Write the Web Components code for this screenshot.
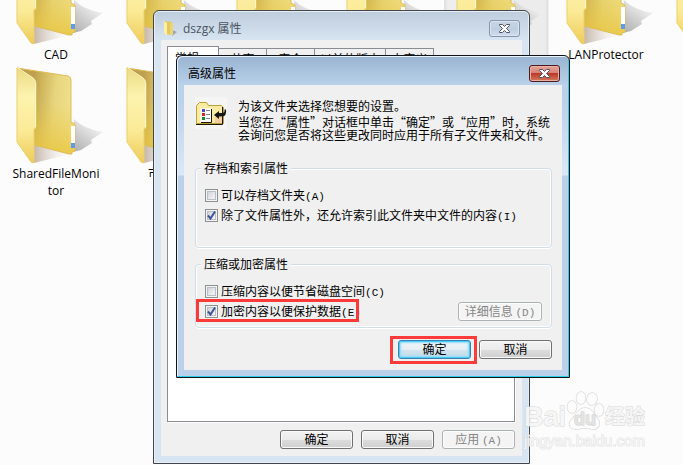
<!DOCTYPE html>
<html lang="zh-CN">
<head>
<meta charset="utf-8">
<title>高级属性</title>
<style>
html, body { height: 100%; margin: 0; }
body { background: #fcfcfc; font: 12px/16px "Noto Sans CJK SC", sans-serif; color: #000; overflow: hidden; }
</style>
</head>
<body>
<desk-top></desk-top>
<script>
const define = (name, html, setup) => customElements.define(name, class extends HTMLElement {
  connectedCallback() {
    if (this.shadowRoot) return;
    const t = document.createElement('template');
    t.innerHTML = html.trim();
    this.attachShadow({ mode: 'open' }).append(t.content.cloneNode(true));
    if (setup) setup(this, this.shadowRoot);
  }
});

const folderArt = `
<svg viewBox="0 0 90 98" aria-hidden="true">
  <defs>
    <linearGradient id="back" x1="0" y1="0" x2="1" y2=".15"><stop offset=".3" stop-color="#bfa04e"/><stop offset=".45" stop-color="#d0b65c"/><stop offset=".7" stop-color="#e8d67e"/><stop offset="1" stop-color="#f0e190"/></linearGradient>
    <linearGradient id="glow" x1="0" y1="0" x2="0" y2="1"><stop offset=".4" stop-color="#e8c840" stop-opacity="0"/><stop offset="1" stop-color="#e8c43c" stop-opacity=".8"/></linearGradient>
    <linearGradient id="front" x1="0" y1="0" x2="0" y2="1"><stop offset="0" stop-color="#eadb85"/><stop offset=".3" stop-color="#fdf3ae"/><stop offset=".65" stop-color="#fbeb98"/><stop offset="1" stop-color="#eecb57"/></linearGradient>
    <linearGradient id="shade" x1="0" y1="1" x2=".7" y2="0"><stop offset="0" stop-color="#adadad"/><stop offset=".5" stop-color="#d2d2d2"/><stop offset="1" stop-color="#fafafa"/></linearGradient>
    <linearGradient id="under" x1="0" y1="0" x2="1" y2="0"><stop offset="0" stop-color="#c5b6a8"/><stop offset="1" stop-color="#fcfcfc" stop-opacity=".2"/></linearGradient>
  </defs>
  <path d="M58 52 Q68 62 87 65 L75 73 L76 76 L65 83 L57 85Z" fill="url(#shade)"/>
  <path d="M18 77 L55 87 L18 96Z" fill="url(#under)"/>
  <path d="M1 1 L52 9 Q55 10 55 13 V55 L59 57 V84 L56 85 V87 L53 87 L18 78Z" fill="url(#back)"/>
  <path d="M1 1 L52 9 Q55 10 55 13 V55 L59 57 V84 L56 85 V87 L53 87 L18 78Z" fill="url(#glow)" stroke="#dfbe56"/>
  <path d="M55 59 H59 V81 H55Z" fill="#fff"/><path d="M55 76 H59 V81 H55Z" fill="#5c9cf0"/>
  <path d="M1 1 L17 11 Q20 13 20 17 V61 L18 62 V96 L15 95 L1 75Z" fill="url(#front)" stroke="#ecd06d"/>
  <path d="M2 1 L17 11 Q19.500 13 19.500 17 V60" fill="none" stroke="#fff7c9"/>
</svg>`;

define('folder-item', `
<style>
:host { display: flex; flex-direction: column; align-items: center; height: 119px; font: 12px/17px "Open Sans", "Noto Sans CJK SC", sans-serif; }
:host([selected]) { background: linear-gradient(90deg, #fcfcfc 3px, #dedede 3px, #eee 7px, #ececec 104px, #dedede 107px, #fcfcfc 108px); }
svg { width: 90px; height: 98px; flex: none; margin-left: 10px; }
span { width: 90px; text-align: center; overflow-wrap: anywhere; }
:host([start]) span { width: 36px; white-space: nowrap; text-align: left; }
</style>${folderArt}<span><slot></slot></span>`);

define('close-button', `
<style>
:host { display: block; }
button { display: grid; place-items: center; width: 31px; height: 17px; padding: 0; border: 1px solid #8694ad; border-radius: 3px; background: linear-gradient(#c5d3e1, #c2d1e1 50%, #bdcde0 50%, #d0deed); box-shadow: inset 0 0 0 1px #dbe6f1; }
:host([red]) button { border-color: #50181c; background: linear-gradient(#e5a59b, #d77e70 50%, #b83c27 50%, #d5785c); box-shadow: inset 0 0 0 1px #e7b1a7; }
svg { width: 13px; height: 11px; }
</style>
<button aria-label="关闭"><svg viewBox="0 0 13 11"><path d="M1.500 1.500 H4.500 L6.500 3.500 L8.500 1.500 H11.500 V2.500 L8.500 5.500 L11.500 8.500 V9.500 H8.500 L6.500 7.500 L4.500 9.500 H1.500 V8.500 L4.500 5.500 L1.500 2.500Z" fill="#fff" stroke="#53546a"/></svg></button>`);

define('push-button', `
<style>
:host { display: block; width: 73px; }
:host([wide]) { width: 84px; }
button { box-sizing: border-box; width: 100%; height: 19px; padding: 0 0 2px; font: 12px/15px "Noto Sans CJK SC", sans-serif; color: #000; border: 1px solid #707070; border-radius: 3px; background: linear-gradient(#f3f3f3, #ebebeb 50%, #dddddd 50%, #cfcfcf); box-shadow: inset 0 0 0 1px #fafafa; }
button:disabled { color: #858585; border-color: #adb2b5; background: #f4f4f4; box-shadow: inset 0 0 0 1px #fcfcfc; }
:host([default]) button { border-color: #3c7fb1; background: linear-gradient(#f0f6f9, #e4eef4 50%, #d3e4ee 50%, #c4dbe8); box-shadow: inset 0 0 0 1px #49cbf5, inset 0 0 2px 2px #8ddcf8; }
</style><button><slot></slot></button>`,
(host, root) => { root.querySelector('button').disabled = host.hasAttribute('disabled'); });

define('access-key', `
<style>:host { font: 11px/12px "Liberation Mono", monospace; }</style>(<slot></slot>)`);

define('check-option', `
<style>
:host { display: block; }
label { display: flex; align-items: center; gap: 3px; height: 20px; white-space: nowrap; }
input { appearance: none; box-sizing: border-box; flex: none; width: 13px; height: 13px; margin: 0; border: 1px solid #8e8f8f; background: linear-gradient(135deg, #c4c9d0, #f4f4f4 75%); box-shadow: inset 0 0 0 1px #f4f4f4, inset 0 0 0 2px #b9bfc7; }
.box { display: grid; }
.box > * { grid-area: 1 / 1; }
svg { width: 13px; height: 13px; pointer-events: none; visibility: hidden; }
input:checked + svg { visibility: visible; }
</style>
<label><span class="box"><input type="checkbox"><svg viewBox="0 0 13 13" aria-hidden="true"><path d="M3 6.500 L5.500 9.500 L10 2.500" fill="none" stroke="#3f5597" stroke-width="2"/></svg></span><span><slot></slot></span></label>`,
(host, root) => { root.querySelector('input').checked = host.hasAttribute('checked'); });

define('group-box', `
<style>
:host { display: block; }
fieldset { box-sizing: border-box; min-width: 0; height: 100%; margin: 0; padding: 0 9px 0 9px; border: 1px solid #d0dce6; border-radius: 4px; box-shadow: inset 0 0 0 1px #fff, 0 1px 0 #fff; }
legend { margin-left: -4px; padding: 0 3px; line-height: 16px; background: #f0f0f0; }
</style><fieldset><legend></legend><slot></slot></fieldset>`,
(host, root) => { root.querySelector('legend').textContent = host.getAttribute('caption'); });

define('tab-strip', `
<style>
:host { display: flex; align-items: flex-end; }
button { box-sizing: border-box; height: 20px; padding: 0 5px; border: 1px solid #898c95; border-left-width: 0; border-bottom: 0; background: linear-gradient(#f2f2f2, #e4e4e4); font: 12px/16px "Noto Sans CJK SC", sans-serif; color: #000; white-space: nowrap; flex: none; min-width: 48px; }
button[aria-selected=true] { height: 22px; width: 52px; padding: 0 7px; text-align: left; border-left-width: 1px; background: #fff; }
</style>
<button role="tab" aria-selected="true">常规</button><button role="tab">共享</button><button role="tab">安全</button><button role="tab">以前的版本</button><button role="tab">自定义</button>`);

define('app-window', `
<style>
:host { display: flex; flex-direction: column; box-sizing: border-box; border: 1px solid #42464c; border-radius: 6px 6px 0 0; padding: 0 7px 7px; background: linear-gradient(#becddc, #d7e4f2 29px, #d7e4f2); box-shadow: inset 0 0 0 1px #e6eef6; }
:host([active]) { border-color: #101418; background: linear-gradient(#99b4d1, #b9d1ea 29px, #b9d1ea 45px, #dbe8f6 119px, #bbd0ea 120px); box-shadow: inset -2px -2px 0 -1px #28cfe8, inset 1px 1px 0 #e8f2fa; }
header { display: flex; align-items: center; gap: 5px; height: 29px; flex: none; padding: 6px 2px 0 2px; box-sizing: border-box; color: #4b5562; }
:host([active]) header { color: #000; padding-left: 4px; }
h1 { flex: 1; margin: 0; font: 12px/16px "Open Sans", "Noto Sans CJK SC", sans-serif; }
main { flex: 1; min-height: 0; background: #f0f0f0; display: flex; flex-direction: column; }
</style>
<header><slot name="icon"></slot><h1></h1><close-button></close-button></header><main><slot></slot></main>`,
(host, root) => {
  root.querySelector('h1').textContent = host.getAttribute('caption');
  if (host.hasAttribute('active')) root.querySelector('close-button').setAttribute('red', '');
});

define('folder-properties', `
<style>
:host { display: block; }
app-window { height: 100%; }
.icon { width: 15px; height: 17px; }
.body { flex: 1; display: flex; flex-direction: column; padding: 6px 7px 7px 6px; gap: 8px; }
.pages { flex: 1; display: flex; flex-direction: column; }
.page { flex: 1; border: 1px solid #898c95; border-top: 0; background: #fff; box-shadow: 1px 1px 0 #fff; }
footer { display: flex; justify-content: flex-end; gap: 8px; }
</style>
<app-window caption="dszgx 属性">
  <svg slot="icon" class="icon" viewBox="0 0 15 17" aria-hidden="true"><path d="M9 10 L14 12 L9 16Z" fill="#9fa6aa"/><path d="M1 1 L9 2 V15 L3 14Z" fill="#e1c75f"/><path d="M1 1 L4 3 V16 L1 13Z" fill="#fff0a0"/><path d="M7 3 H10 V15 H7Z" fill="#ecd674"/></svg>
  <div class="body"><div class="pages"><tab-strip role="tablist"></tab-strip><div class="page"></div></div>
  <footer><push-button>确定</push-button><push-button>取消</push-button><push-button disabled>应用 <access-key>A</access-key></push-button></footer></div>
</app-window>`);

define('advanced-attributes', `
<style>
:host { display: block; }
app-window { height: 100%; }
.body { flex: 1; display: flex; flex-direction: column; padding: 12px 10px 11px 11px; }
.intro { display: flex; gap: 11px; height: 63px; }
.intro svg { width: 32px; height: 32px; flex: none; }
p { margin: 0; line-height: 13px; }
p + p { margin-top: 3px; }
.text { padding-top: 2px; white-space: nowrap; }
.archive { height: 88px; }
.crypt { height: 72px; margin-top: 8px; }
.stack { display: flex; flex-direction: column; padding-top: 9px; }
.row { display: flex; align-items: center; justify-content: space-between; }
.marked { position: relative; }
.marked::after { content: ""; position: absolute; border: 3px solid #fb3a3a; pointer-events: none; }
.option::after { inset: -2px 2px -1px -9px; }
footer { display: flex; justify-content: flex-end; gap: 8px; margin-top: auto; }
.ok::after { inset: -4px -6px -5px -8px; }
</style>
<app-window active caption="高级属性">
 <div class="body">
  <div class="intro">
   <svg viewBox="0 0 32 32" aria-hidden="true"><path d="M0 0H32V32H0Z" fill="#f5f5f5"/><path d="M1.500 26.500 V8.500 L4.500 5.500 H11.500 L13.500 8.500 H26.500 L28.500 10.500 V26.500Z" fill="#f9eba4" stroke="#b9a034"/><path d="M20 20H28V26H20Z" fill="#f3cf9f"/><path d="M1 27.500 H27.500 V10" fill="none" stroke="#1c1700"/><path d="M5.500 11.500 H16.500 V25.500 H5.500Z" fill="#fff"/><path d="M16.500 12 V25.500 H6" fill="none" stroke="#1c1700"/><path d="M7 12 H10 V15 H7Z" fill="#4e4cd0"/><path d="M7 16 H10 V19 H7Z" fill="#db2525"/><path d="M7 20 H10 V23 H7Z" fill="#188639"/><path d="M11 13.500H15M11 17.500H15M11 21.500H15" stroke="#82838b"/><path d="M19 18 L24 14 V16 H27 Q30 16 29.500 12.500 H31 Q32 19 27 19.500 H24 V22Z" fill="#151515"/></svg>
   <div class="text"><p>为该文件夹选择您想要的设置。</p><p>当您在“属性”对话框中单击“确定”或“应用”时，系统<br>会询问您是否将这些更改同时应用于所有子文件夹和文件。</p></div>
  </div>
  <group-box class="archive" caption="存档和索引属性"><div class="stack"><check-option>可以存档文件夹<access-key>A</access-key></check-option><check-option checked>除了文件属性外，还允许索引此文件夹中文件的内容<access-key>I</access-key></check-option></div></group-box>
  <group-box class="crypt" caption="压缩或加密属性"><div class="stack"><check-option>压缩内容以便节省磁盘空间<access-key>C</access-key></check-option><div class="row"><check-option class="marked option" checked>加密内容以便保护数据<access-key>E</access-key></check-option><push-button wide disabled>详细信息 <access-key>D</access-key></push-button></div></div></group-box>
  <footer><push-button class="marked ok" default>确定</push-button><push-button>取消</push-button></footer>
 </div>
</app-window>`);

define('site-mark', `
<style>
:host { display: flex; flex-direction: column; color: #f6f6f6; opacity: .9; font-family: "Liberation Sans", "Noto Sans CJK SC", sans-serif; -webkit-text-stroke: 1px #d4d4d4; paint-order: stroke fill; }
.brand { display: flex; align-items: flex-end; font: bold 27px/28px "Liberation Sans", "Noto Sans CJK SC", sans-serif; }
.paw { display: grid; width: 38px; height: 40px; }
.paw > * { grid-area: 1 / 1; }
.paw span { align-self: end; justify-self: center; font-size: 18px; line-height: 24px; color: #e2e2e2; -webkit-text-stroke: 1px #c6c6c6; }
.cn { font-size: 20px; padding-left: 1px; }
.site { font-size: 15px; line-height: 20px; -webkit-text-stroke: 1px #dedede; }
</style>
<div class="brand"><span>Bai</span><span class="paw"><svg viewBox="0 0 38 40" aria-hidden="true"><g fill="#fdfdfd" stroke="#d9d9d9" stroke-width="1.500"><ellipse cx="6" cy="16" rx="4.500" ry="6"/><ellipse cx="15" cy="7" rx="4.500" ry="6"/><ellipse cx="26" cy="8" rx="5" ry="6" transform="rotate(12 26 8)"/><ellipse cx="33" cy="19" rx="4.500" ry="6"/><path d="M19 17 C26 17 27 23 31 27 C36 33 32 39 26 38 Q19 36 12 38 C4 39 1 33 6 28 C11 24 12 17 19 17Z"/></g></svg><span>du</span></span><span class="cn">经验</span></div>
<div class="site">jingyan.baidu.com</div>`);

define('desk-top', `
<style>
:host { display: block; position: relative; height: 100%; overflow: hidden; }
.files { display: grid; grid-template-columns: repeat(7, 110px); margin: -52px 0 0 1px; }
.props, .advanced, site-mark { position: absolute; }
.props { left: 153px; top: 10px; width: 377px; height: 454px; }
.advanced { left: 176px; top: 55px; width: 394px; height: 323px; }
site-mark { left: 524px; top: 391px; }
</style>
<div class="files"><folder-item>CAD</folder-item><folder-item></folder-item><folder-item></folder-item><folder-item></folder-item><folder-item selected></folder-item><folder-item>LANProtector</folder-item><folder-item></folder-item><folder-item>SharedFileMonitor</folder-item><folder-item start>市</folder-item></div>
<folder-properties class="props"></folder-properties>
<advanced-attributes class="advanced"></advanced-attributes>
<site-mark></site-mark>`);
</script>
</body>
</html>
